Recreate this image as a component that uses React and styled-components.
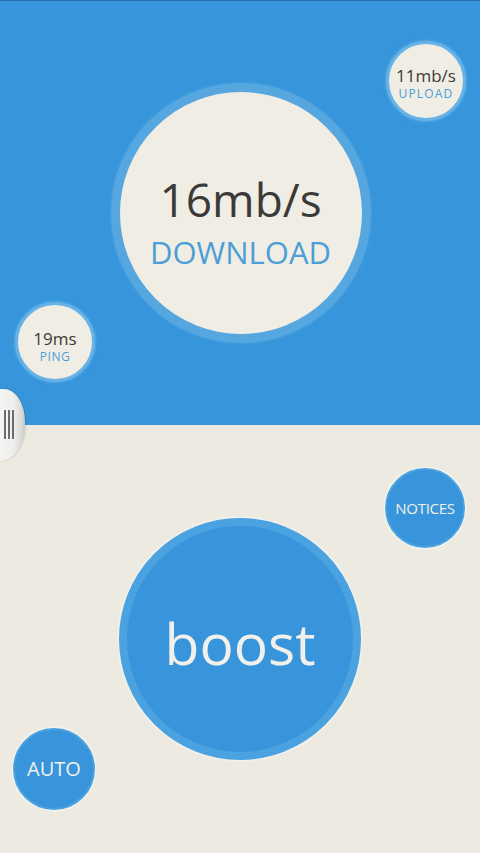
import React from "react";
import styled, { createGlobalStyle } from "styled-components";

const GlobalStyle = createGlobalStyle`
  html, body { margin: 0; padding: 0; }
  body {
    font-family: "Open Sans", "Noto Sans", "DejaVu Sans", sans-serif;
    background: #edebe1;
    -webkit-font-smoothing: antialiased;
  }
`;

const Screen = styled.div`
  position: relative;
  width: 480px;
  height: 853px;
  overflow: hidden;
  display: flex;
  flex-direction: column;
`;

const Panel = styled.section`
  display: grid;
  grid-template-columns: ${(p) => p.$cols};
  column-gap: ${(p) => p.$gap};
  padding-left: ${(p) => p.$padLeft};
  height: ${(p) => p.$height}px;
  box-sizing: border-box;
  background: ${(p) => (p.$dark ? "#3796db" : "#edebe1")};
  border-top: ${(p) => (p.$dark ? "1px solid #2a6fae" : "none")};
  align-items: start;
`;

const Bubble = styled.div`
  box-sizing: border-box;
  width: ${(p) => p.$size}px;
  height: ${(p) => p.$size}px;
  margin-top: ${(p) => p.$top}px;
  border-radius: 50%;
  display: flex;
  flex-direction: column;
  align-items: center;
  justify-content: center;
  padding-top: ${(p) => p.$shift || 0}px;
  border: ${(p) => p.$ring}px solid ${(p) => p.$ringColor};
  background: ${(p) => p.$fill};
  box-shadow: 0 0 2px 1px ${(p) => p.$glow};
`;

const Value = styled.div`
  font-size: ${(p) => p.$size}px;
  line-height: 1.15;
  color: #3b3a38;
  white-space: nowrap;
`;

const Caption = styled.div`
  font-size: ${(p) => p.$size}px;
  line-height: 1.15;
  color: #4b9fd6;
  letter-spacing: ${(p) => p.$spacing || 0}px;
  margin-top: ${(p) => p.$gap}px;
  white-space: nowrap;
`;

const ButtonLabel = styled.span`
  font-size: ${(p) => p.$size}px;
  line-height: 1;
  color: #f2f0ea;
  letter-spacing: ${(p) => p.$spacing || 0}px;
  white-space: nowrap;
`;

const Handle = styled.div`
  position: absolute;
  left: 0;
  top: 389px;
  width: 25px;
  height: 72px;
  border-radius: 0 22px 26px 0 / 0 34px 38px 0;
  background: linear-gradient(90deg, #f4f4f2 0%, #eeeeec 55%, #d9d9d6 85%, #c8c8c5 100%);
  box-shadow: 1px 0 2px rgba(0, 0, 0, 0.15);
  display: flex;
  gap: 2px;
  padding: 21px 0 0 4px;
  box-sizing: border-box;
`;

const Grip = styled.span`
  width: 2px;
  height: 29px;
  background: #6d6d6b;
`;

export default function App() {
  return (
    <>
      <GlobalStyle />
      <Screen>
        <Panel $dark $height={425} $cols="80px 260px 80px" $gap="15.5px" $padLeft="15px">
          <Bubble
            $size={80}
            $top={301}
            $ring={3}
            $ringColor="#67b2e6"
            $fill="#f0ede4"
            $glow="rgba(120,190,240,0.5)"
            $shift={9}
          >
            <Value $size={17}>19ms</Value>
            <Caption $size={12} $spacing={0.6} $gap={2}>PING</Caption>
          </Bubble>
          <Bubble
            $size={260}
            $top={82}
            $ring={9}
            $ringColor="#56a6e0"
            $fill="#f0ede4"
            $glow="rgba(90,170,230,0.4)"
            $shift={18}
          >
            <Value $size={46}>16mb/s</Value>
            <Caption $size={31} $gap={9}>DOWNLOAD</Caption>
          </Bubble>
          <Bubble
            $size={80}
            $top={40}
            $ring={3}
            $ringColor="#67b2e6"
            $fill="#f0ede4"
            $glow="rgba(120,190,240,0.5)"
            $shift={5}
          >
            <Value $size={17}>11mb/s</Value>
            <Caption $size={12} $spacing={1.2} $gap={2}>UPLOAD</Caption>
          </Bubble>
        </Panel>
        <Panel $height={428} $cols="82px 242px 80px" $gap="24px" $padLeft="13px">
          <Bubble
            $size={82}
            $top={303}
            $ring={2}
            $ringColor="#4aa2e0"
            $fill="#3895db"
            $glow="rgba(255,255,255,0.6)"
          >
            <ButtonLabel $size={20}>AUTO</ButtonLabel>
          </Bubble>
          <Bubble
            $size={242}
            $top={93}
            $ring={8}
            $ringColor="#4ba2e1"
            $fill="#3895db"
            $glow="rgba(255,255,255,0.5)"
            $shift={8}
          >
            <ButtonLabel $size={57}>boost</ButtonLabel>
          </Bubble>
          <Bubble
            $size={80}
            $top={43}
            $ring={2}
            $ringColor="#4aa2e0"
            $fill="#3895db"
            $glow="rgba(255,255,255,0.6)"
          >
            <ButtonLabel $size={15} $spacing={-0.3}>NOTICES</ButtonLabel>
          </Bubble>
        </Panel>
        <Handle>
          <Grip />
          <Grip />
          <Grip />
        </Handle>
      </Screen>
    </>
  );
}
